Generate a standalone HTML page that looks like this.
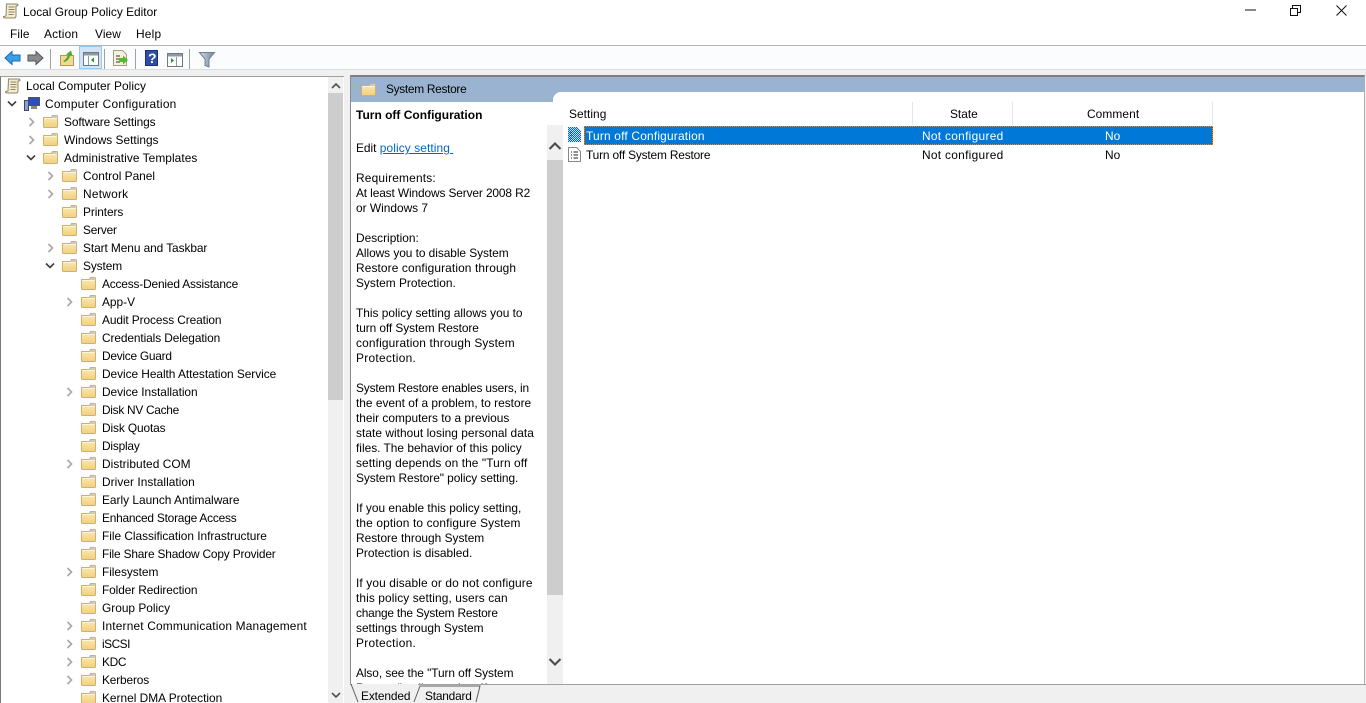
<!DOCTYPE html>
<html><head><meta charset="utf-8"><title>Local Group Policy Editor</title>
<style>
html,body{margin:0;padding:0;background:#fff;overflow:hidden}
#a{position:relative;width:1366px;height:703px;overflow:hidden;background:#fff;font:11.9px/15px "Liberation Sans",sans-serif;color:#000}
#a div,#a span.t,#a svg{position:absolute}
.t{position:absolute;white-space:nowrap}
</style></head><body><div id="a">
<svg width="0" height="0" style="position:absolute"><defs>
<linearGradient id="g" x1="0" y1="0" x2="0" y2="1"><stop offset="0" stop-color="#fcedb8"/><stop offset="1" stop-color="#f1cf7f"/></linearGradient>
<symbol id="f" viewBox="0 0 15 13"><path d="M.5 2.500h8l1-2h4q1 0 1 1v10q0 1-1 1h-12q-1 0-1-1z" fill="url(#g)" stroke="#d0b06c"/><path d="M9.500 1.500h4v1h-4z" fill="#7fb3d8"/><path d="M1.500 3.500h12" stroke="#fff6d6"/></symbol>
<symbol id="r" viewBox="0 0 8 10"><path d="M1.500 1l4 4-4 4" fill="none" stroke="#a6a6a6" stroke-width="1.600"/></symbol>
<symbol id="d" viewBox="0 0 10 8"><path d="M1 1.500l4 4 4-4" fill="none" stroke="#404040" stroke-width="1.600"/></symbol>
<symbol id="s" viewBox="0 0 16 17"><path d="M3.500 1h10q1.500 0 1.500 1.500l-1 .5-1 0v10q0 2-2 2H2q-1.500 0-1.500-1.500L3 13z" fill="#f5edcf" stroke="#8d8468"/><path d="M5.500 4h6M5.500 6.500h6M5.500 9h6M5.500 11.500h5" stroke="#8d8468"/></symbol>
</defs></svg>

<!-- title bar -->
<svg style="left:3px;top:3px" width="16" height="17"><use href="#s"/></svg>
<span class="t" style="left:23px;top:5px">Local Group Policy Editor</span>
<svg style="left:1245px;top:9px" width="12" height="2"><path d="M0 1h11" stroke="#111"/></svg>
<svg style="left:1290px;top:5px" width="11" height="11" fill="none" stroke="#111"><path d="M.5 3.500h7v7h-7zM2.500 3.500v-3h8v7h-3"/></svg>
<svg style="left:1336px;top:5px" width="11" height="11" stroke="#111"><path d="M.5.500l10 10M10.500.500l-10 10"/></svg>

<!-- menu -->
<span class="t" style="left:10px;top:27px;letter-spacing:.1px">File</span>
<span class="t" style="left:44px;top:27px;letter-spacing:.2px">Action</span>
<span class="t" style="left:95px;top:27px;letter-spacing:.1px">View</span>
<span class="t" style="left:136px;top:27px;letter-spacing:.2px">Help</span>
<div style="left:0;top:45px;width:1366px;height:1px;background:#b4b4b4"></div>

<!-- toolbar -->
<div style="left:0;top:46px;width:1366px;height:23px;background:#fbfcfe"></div>
<svg style="left:0;top:46px" width="225" height="23">
<defs><linearGradient id="fn" x1="0" y1="0" x2="1" y2="0"><stop offset="0" stop-color="#d4dde6"/><stop offset="1" stop-color="#6d8296"/></linearGradient></defs>
<path d="M5 12l7-6.500V9h8v6h-8v3.500z" fill="#3aa0e8" stroke="#1d68b0"/>
<path d="M43 12l-7-6.500V9h-8v6h8v3.500z" fill="#8a8a8a" stroke="#555"/>
<path d="M50.500 3v20M104.500 3v20M135.500 3v20M189.500 3v20" stroke="#a0a0a0"/>
<path d="M60.500 9.500h13v10h-13z" fill="#f3d990" stroke="#b59a55"/>
<path d="M63 15q3-1 5-6l-2-.5 5-4 1.500 5.500-2-1q-2 6-6 7z" fill="#4caa2c"/>
<rect x="79.500" y=".5" width="22" height="22" fill="#cfe5f7" stroke="#9cc8ea"/>
<rect x="83.500" y="6.500" width="15" height="13" fill="#fff" stroke="#777"/><path d="M84 7h14v2.500H84z" fill="#8a98a8"/><path d="M88.500 10v9" stroke="#8a98a8"/><path d="M94 11.500v5l-3-2.500z" fill="#1f9a2a"/>
<path d="M113.500 4.500h9l4 4v11h-13z" fill="#f6f1df" stroke="#a39c85"/><path d="M116 10h4M116 13h4M116 16h4" stroke="#333"/><path d="M119 12h4v-2.500l5 4.500-5 4.500V16h-4z" fill="#55b82e"/>
<rect x="145.500" y="4.500" width="12" height="15" fill="#2f4da8" stroke="#1c2f78"/><text x="148" y="17" font-family="Liberation Sans" font-size="14" font-weight="bold" fill="#fff">?</text>
<rect x="167.500" y="7.500" width="15" height="13" fill="#fff" stroke="#777"/><path d="M168 8h14v2.500h-14z" fill="#8a98a8"/><path d="M176.500 11v9" stroke="#8a98a8"/><path d="M171 12v5l3-2.500z" fill="#1f9a2a"/>
<path d="M199.500 6.500h15l-5.500 6.500v8l-4-1.500v-6.500z" fill="url(#fn)" stroke="#6d8296"/>
</svg>
<div style="left:0;top:69px;width:1366px;height:6px;background:#f0f0f0;border-top:1px solid #dcdcdc;box-sizing:border-box"></div>
<div style="left:0;top:75px;width:1366px;height:628px;background:#f0f0f0"></div>

<!-- left pane -->
<div style="left:0;top:76px;width:344px;height:627px;background:#fff;border-left:1px solid #7a7a7a;border-top:1px solid #a0a0a0;box-sizing:border-box"></div>
<div style="left:328px;top:77px;width:15px;height:626px;background:#f0f0f0"></div>
<div style="left:328px;top:93px;width:15px;height:307px;background:#cdcdcd"></div>
<svg style="left:331px;top:82px" width="10" height="8"><path d="M1 6l4-4 4 4" fill="none" stroke="#505050" stroke-width="1.600"/></svg>
<svg style="left:331px;top:691px" width="10" height="8"><path d="M1 2l4 4 4-4" fill="none" stroke="#505050" stroke-width="1.600"/></svg>

<svg style="left:5px;top:78px" width="16" height="17"><use href="#s"/></svg>
<span class="t" style="left:26px;top:79px;letter-spacing:.05px">Local Computer Policy</span>
<svg style="left:7px;top:100px" width="10" height="8"><use href="#d"/></svg>
<svg style="left:24px;top:97px" width="16" height="14"><rect x="4.500" y=".5" width="11" height="8" fill="#2a4fc0" stroke="#555"/><rect x="7" y="9" width="6" height="3" fill="#888"/><rect x=".5" y="3.500" width="4" height="10" fill="#7fa8c8" stroke="#446"/></svg>
<span class="t" style="left:45px;top:97px;letter-spacing:.24px">Computer Configuration</span>

<!-- level 2 -->
<svg style="left:28px;top:117px" width="8" height="10"><use href="#r"/></svg>
<svg style="left:43px;top:115px" width="15" height="13"><use href="#f"/></svg>
<span class="t" style="left:64px;top:115px;letter-spacing:-.1px">Software Settings</span>
<svg style="left:28px;top:135px" width="8" height="10"><use href="#r"/></svg>
<svg style="left:43px;top:133px" width="15" height="13"><use href="#f"/></svg>
<span class="t" style="left:64px;top:133px">Windows Settings</span>
<svg style="left:26px;top:154px" width="10" height="8"><use href="#d"/></svg>
<svg style="left:43px;top:151px" width="15" height="13"><use href="#f"/></svg>
<span class="t" style="left:64px;top:151px;letter-spacing:.06px">Administrative Templates</span>

<!-- level 3 -->
<svg style="left:47px;top:171px" width="8" height="10"><use href="#r"/></svg>
<svg style="left:62px;top:169px" width="15" height="13"><use href="#f"/></svg>
<span class="t" style="left:83px;top:169px">Control Panel</span>
<svg style="left:47px;top:189px" width="8" height="10"><use href="#r"/></svg>
<svg style="left:62px;top:187px" width="15" height="13"><use href="#f"/></svg>
<span class="t" style="left:83px;top:187px;letter-spacing:.25px">Network</span>
<svg style="left:62px;top:205px" width="15" height="13"><use href="#f"/></svg>
<span class="t" style="left:83px;top:205px;letter-spacing:-.1px">Printers</span>
<svg style="left:62px;top:223px" width="15" height="13"><use href="#f"/></svg>
<span class="t" style="left:83px;top:223px;letter-spacing:-.2px">Server</span>
<svg style="left:47px;top:243px" width="8" height="10"><use href="#r"/></svg>
<svg style="left:62px;top:241px" width="15" height="13"><use href="#f"/></svg>
<span class="t" style="left:83px;top:241px;letter-spacing:-.08px">Start Menu and Taskbar</span>
<svg style="left:45px;top:262px" width="10" height="8"><use href="#d"/></svg>
<svg style="left:62px;top:259px" width="15" height="13"><use href="#f"/></svg>
<span class="t" style="left:83px;top:259px;letter-spacing:-.1px">System</span>

<!-- level 4 -->
<svg style="left:81px;top:277px" width="15" height="13"><use href="#f"/></svg><span class="t" style="left:102px;top:277px;letter-spacing:-.17px">Access-Denied Assistance</span>
<svg style="left:66px;top:297px" width="8" height="10"><use href="#r"/></svg><svg style="left:81px;top:295px" width="15" height="13"><use href="#f"/></svg><span class="t" style="left:102px;top:295px">App-V</span>
<svg style="left:81px;top:313px" width="15" height="13"><use href="#f"/></svg><span class="t" style="left:102px;top:313px;letter-spacing:-.1px">Audit Process Creation</span>
<svg style="left:81px;top:331px" width="15" height="13"><use href="#f"/></svg><span class="t" style="left:102px;top:331px;letter-spacing:-.1px">Credentials Delegation</span>
<svg style="left:81px;top:349px" width="15" height="13"><use href="#f"/></svg><span class="t" style="left:102px;top:349px;letter-spacing:-.25px">Device Guard</span>
<svg style="left:81px;top:367px" width="15" height="13"><use href="#f"/></svg><span class="t" style="left:102px;top:367px;letter-spacing:-.05px">Device Health Attestation Service</span>
<svg style="left:66px;top:387px" width="8" height="10"><use href="#r"/></svg><svg style="left:81px;top:385px" width="15" height="13"><use href="#f"/></svg><span class="t" style="left:102px;top:385px;letter-spacing:-.05px">Device Installation</span>
<svg style="left:81px;top:403px" width="15" height="13"><use href="#f"/></svg><span class="t" style="left:102px;top:403px;letter-spacing:-.28px">Disk NV Cache</span>
<svg style="left:81px;top:421px" width="15" height="13"><use href="#f"/></svg><span class="t" style="left:102px;top:421px;letter-spacing:-.12px">Disk Quotas</span>
<svg style="left:81px;top:439px" width="15" height="13"><use href="#f"/></svg><span class="t" style="left:102px;top:439px;letter-spacing:-.2px">Display</span>
<svg style="left:66px;top:459px" width="8" height="10"><use href="#r"/></svg><svg style="left:81px;top:457px" width="15" height="13"><use href="#f"/></svg><span class="t" style="left:102px;top:457px;letter-spacing:.05px">Distributed COM</span>
<svg style="left:81px;top:475px" width="15" height="13"><use href="#f"/></svg><span class="t" style="left:102px;top:475px;letter-spacing:.05px">Driver Installation</span>
<svg style="left:81px;top:493px" width="15" height="13"><use href="#f"/></svg><span class="t" style="left:102px;top:493px">Early Launch Antimalware</span>
<svg style="left:81px;top:511px" width="15" height="13"><use href="#f"/></svg><span class="t" style="left:102px;top:511px;letter-spacing:-.22px">Enhanced Storage Access</span>
<svg style="left:81px;top:529px" width="15" height="13"><use href="#f"/></svg><span class="t" style="left:102px;top:529px;letter-spacing:-.03px">File Classification Infrastructure</span>
<svg style="left:81px;top:547px" width="15" height="13"><use href="#f"/></svg><span class="t" style="left:102px;top:547px;letter-spacing:-.18px">File Share Shadow Copy Provider</span>
<svg style="left:66px;top:567px" width="8" height="10"><use href="#r"/></svg><svg style="left:81px;top:565px" width="15" height="13"><use href="#f"/></svg><span class="t" style="left:102px;top:565px;letter-spacing:-.05px">Filesystem</span>
<svg style="left:81px;top:583px" width="15" height="13"><use href="#f"/></svg><span class="t" style="left:102px;top:583px;letter-spacing:-.1px">Folder Redirection</span>
<svg style="left:81px;top:601px" width="15" height="13"><use href="#f"/></svg><span class="t" style="left:102px;top:601px">Group Policy</span>
<svg style="left:66px;top:621px" width="8" height="10"><use href="#r"/></svg><svg style="left:81px;top:619px" width="15" height="13"><use href="#f"/></svg><span class="t" style="left:102px;top:619px;letter-spacing:.18px">Internet Communication Management</span>
<svg style="left:66px;top:639px" width="8" height="10"><use href="#r"/></svg><svg style="left:81px;top:637px" width="15" height="13"><use href="#f"/></svg><span class="t" style="left:102px;top:637px;letter-spacing:-.5px">iSCSI</span>
<svg style="left:66px;top:657px" width="8" height="10"><use href="#r"/></svg><svg style="left:81px;top:655px" width="15" height="13"><use href="#f"/></svg><span class="t" style="left:102px;top:655px;letter-spacing:-.3px">KDC</span>
<svg style="left:66px;top:675px" width="8" height="10"><use href="#r"/></svg><svg style="left:81px;top:673px" width="15" height="13"><use href="#f"/></svg><span class="t" style="left:102px;top:673px;letter-spacing:-.15px">Kerberos</span>
<svg style="left:81px;top:691px" width="15" height="13"><use href="#f"/></svg><span class="t" style="left:102px;top:691px">Kernel DMA Protection</span>

<!-- right pane -->
<div style="left:350px;top:75px;width:1015px;height:610px;background:#fff;border-right:1px solid #b0b0b0;border-left:1px solid #8a8a8a;border-top:2px solid #808080;box-sizing:border-box"></div>
<div style="left:351px;top:77px;width:1013px;height:25px;background:#9ab3d0"></div>
<div style="left:553px;top:92px;width:811px;height:12px;background:#fff;border-radius:8px 0 0 0"></div>
<svg style="left:361px;top:83px" width="15" height="13"><use href="#f"/></svg>
<span class="t" style="left:386px;top:82px;letter-spacing:-.3px">System Restore</span>

<span class="t" style="left:356px;top:108px;font-weight:bold;font-size:12px">Turn off Configuration</span>
<span class="t" style="left:356px;top:141px">Edit <span style="color:#0066cc;text-decoration:underline;letter-spacing:.1px">policy setting&nbsp;</span></span>
<div style="left:356px;top:171px;width:190px;height:513px;overflow:hidden;white-space:nowrap"><span style="letter-spacing:.2px">Requirements:</span><br><span style="letter-spacing:-.12px">At least Windows Server 2008 R2</span><br>or Windows 7<br><br>Description:<br><span style="letter-spacing:-.05px">Allows you to disable System</span><br><span style="letter-spacing:.12px">Restore configuration through</span><br>System Protection.<br><br>This policy setting allows you to<br><span style="letter-spacing:-.08px">turn off System Restore</span><br><span style="letter-spacing:.15px">configuration through System</span><br><span style="letter-spacing:.3px">Protection.</span><br><br><span style="letter-spacing:-.15px">System Restore enables users, in</span><br>the event of a problem, to restore<br>their computers to a previous<br><span style="letter-spacing:.04px">state without losing personal data</span><br>files. The behavior of this policy<br><span style="letter-spacing:.1px">setting depends on the "Turn off</span><br><span style="letter-spacing:-.06px">System Restore" policy setting.</span><br><br>If you enable this policy setting,<br><span style="letter-spacing:.13px">the option to configure System</span><br>Restore through System<br>Protection is disabled.<br><br><span style="letter-spacing:.12px">If you disable or do not configure</span><br><span style="letter-spacing:.1px">this policy setting, users can</span><br><span style="letter-spacing:-.2px">change the System Restore</span><br>settings through System<br><span style="letter-spacing:.3px">Protection.</span><br><br><span style="letter-spacing:-.07px">Also, see the "Turn off System</span><br>Restore" policy setting. If</div>
<div style="left:547px;top:125px;width:16px;height:559px;background:#f0f0f0"></div>
<div style="left:547px;top:160px;width:16px;height:435px;background:#cdcdcd"></div>
<svg style="left:548px;top:141px" width="14" height="10"><path d="M1.500 8l5.500-5.500L12.500 8" fill="none" stroke="#505050" stroke-width="2.200"/></svg>
<svg style="left:548px;top:657px" width="14" height="10"><path d="M1.500 2l5.500 5.500L12.500 2" fill="none" stroke="#505050" stroke-width="2.200"/></svg>

<span class="t" style="left:569px;top:107px;letter-spacing:.05px">Setting</span>
<span class="t" style="left:950px;top:107px">State</span>
<span class="t" style="left:1087px;top:107px;letter-spacing:.1px">Comment</span>
<div style="left:912px;top:102px;width:1px;height:23px;background:#e5e5e5"></div>
<div style="left:1012px;top:102px;width:1px;height:23px;background:#e5e5e5"></div>
<div style="left:1212px;top:102px;width:1px;height:23px;background:#e5e5e5"></div>

<div style="left:584px;top:126px;width:629px;height:19px;background:#0078d7;outline:1px dotted #f08a1d;outline-offset:-1px"></div>
<svg style="left:568px;top:127px" width="13" height="15"><defs><pattern id="p" width="2" height="2" patternUnits="userSpaceOnUse"><rect width="2" height="2" fill="#bcdcf5"/><rect width="1" height="1" fill="#0467c4"/><rect x="1" y="1" width="1" height="1" fill="#0467c4"/></pattern></defs><path d="M0 0h9l4 4v11H0z" fill="url(#p)"/><path d="M3 5v1M3 8v1M3 11v1" stroke="#123"/></svg>
<span class="t" style="left:586px;top:129px;color:#fff;letter-spacing:.2px">Turn off Configuration</span>
<span class="t" style="left:922px;top:129px;color:#fff;letter-spacing:.3px">Not configured</span>
<span class="t" style="left:1105px;top:129px;color:#fff">No</span>
<svg style="left:568px;top:147px" width="13" height="15"><path d="M.5.500h8l4 4v10H.500z" fill="#fff" stroke="#888"/><path d="M3 5h1M3 8h1M3 11h1M5.500 5H10M5.500 8H10M5.500 11H10" stroke="#222"/></svg>
<span class="t" style="left:586px;top:148px;letter-spacing:-.17px">Turn off System Restore</span>
<span class="t" style="left:922px;top:148px;letter-spacing:.3px">Not configured</span>
<span class="t" style="left:1105px;top:148px">No</span>

<!-- tabs -->
<div style="left:350px;top:684px;width:1016px;height:19px;background:#f0f0f0"></div>
<div style="left:350px;top:684px;width:1016px;height:1px;background:#a0a0a0"></div>
<svg style="left:348px;top:684px" width="140" height="19"><path d="M3 0l7 18M66 18L72 2h60l-4 16" fill="none" stroke="#606060"/><rect x="4" y="0" width="66" height="1" fill="#f0f0f0"/></svg>
<span class="t" style="left:361px;top:689px;letter-spacing:-.1px">Extended</span>
<span class="t" style="left:425px;top:689px;letter-spacing:-.2px">Standard</span>
</div></body></html>
